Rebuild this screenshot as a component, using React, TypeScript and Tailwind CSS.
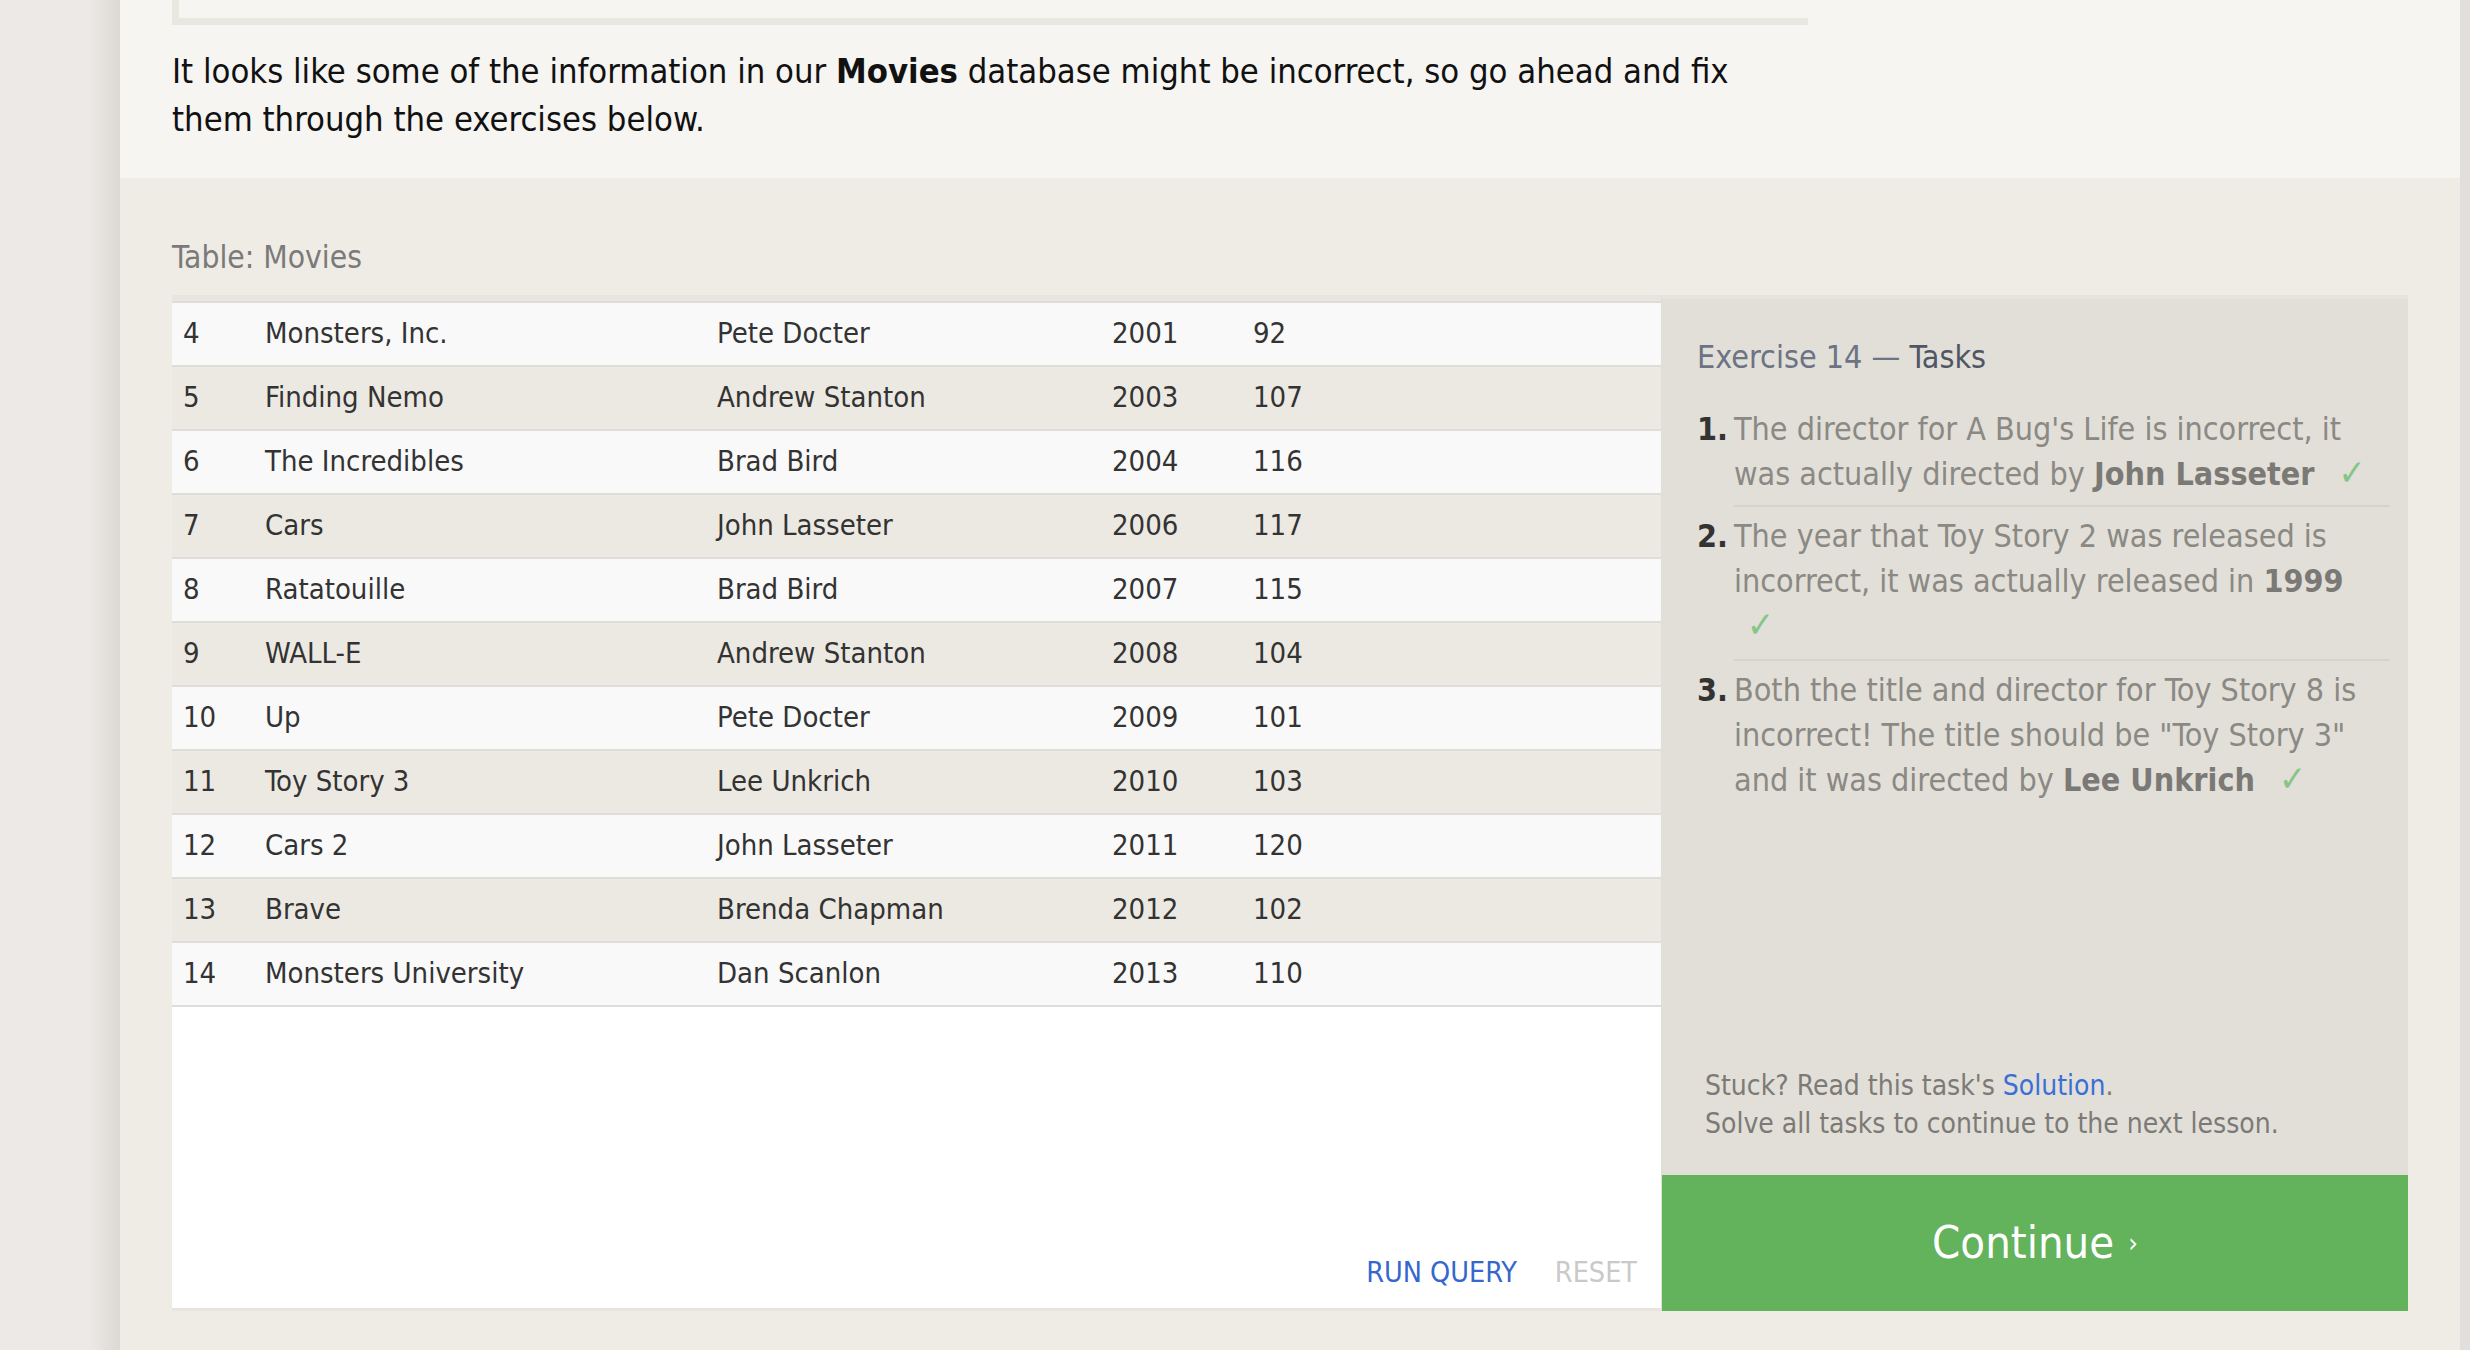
const movies = [
  { id: 4, title: "Monsters, Inc.", director: "Pete Docter", year: 2001, length: 92 },
  { id: 5, title: "Finding Nemo", director: "Andrew Stanton", year: 2003, length: 107 },
  { id: 6, title: "The Incredibles", director: "Brad Bird", year: 2004, length: 116 },
  { id: 7, title: "Cars", director: "John Lasseter", year: 2006, length: 117 },
  { id: 8, title: "Ratatouille", director: "Brad Bird", year: 2007, length: 115 },
  { id: 9, title: "WALL-E", director: "Andrew Stanton", year: 2008, length: 104 },
  { id: 10, title: "Up", director: "Pete Docter", year: 2009, length: 101 },
  { id: 11, title: "Toy Story 3", director: "Lee Unkrich", year: 2010, length: 103 },
  { id: 12, title: "Cars 2", director: "John Lasseter", year: 2011, length: 120 },
  { id: 13, title: "Brave", director: "Brenda Chapman", year: 2012, length: 102 },
  { id: 14, title: "Monsters University", director: "Dan Scanlon", year: 2013, length: 110 },
];

function Check({ className = "" }: { className?: string }) {
  return <span className={`text-[36px] leading-[0] text-[#86c586] ${className}`}>✓</span>;
}

function TasksPanel() {
  return (
    <aside className="flex w-[746px] flex-none flex-col border-t-4 border-[#e6e4dc] bg-[#e2dfd8]">
      <div className="flex-1 pl-[35px] pr-[18px] pt-[38px]">
        <h3 className="text-[32px] leading-[40px] text-[#6c7384]">
          Exercise 14 — <span className="text-[#4f5664]">Tasks</span>
        </h3>
        <ol className="mt-[30px] whitespace-nowrap text-[32px] leading-[45px]">
          <li className="flex">
            <span className="w-[37px] flex-none font-bold text-[#333333]">1.</span>
            <div className="flex-1 border-b-2 border-[#d6d3cb] pb-[8px] text-[#8a8984]">
              The director for A Bug's Life is incorrect, it
              <br />
              was actually directed by{" "}
              <b className="text-[#7a7975]">John Lasseter</b>
              <Check className="ml-[24px]" />
            </div>
          </li>
          <li className="flex pt-[7px]">
            <span className="w-[37px] flex-none font-bold text-[#333333]">2.</span>
            <div className="flex-1 border-b-2 border-[#d6d3cb] pb-[10px] text-[#8a8984]">
              The year that Toy Story 2 was released is
              <br />
              incorrect, it was actually released in{" "}
              <b className="text-[#7a7975]">1999</b>
              <br />
              <Check className="ml-[13px]" />
            </div>
          </li>
          <li className="flex pt-[7px]">
            <span className="w-[37px] flex-none font-bold text-[#333333]">3.</span>
            <div className="flex-1 text-[#8a8984]">
              Both the title and director for Toy Story 8 is
              <br />
              incorrect! The title should be "Toy Story 3"
              <br />
              and it was directed by <b className="text-[#7a7975]">Lee Unkrich</b>
              <Check className="ml-[24px]" />
            </div>
          </li>
        </ol>
      </div>
      <p className="pb-[32px] pl-[43px] text-[28px] leading-[38px] text-[#7c7a77]">
        Stuck? Read this task's <a className="text-[#3a6fd6]">Solution</a>.
        <br />
        Solve all tasks to continue to the next lesson.
      </p>
      <button className="flex h-[136px] items-center justify-center bg-[#62b35b] text-[45px] text-white">
        Continue <span className="ml-[14px] text-[27px]">›</span>
      </button>
    </aside>
  );
}

function MoviesTable() {
  return (
    <div className="flex flex-1 flex-col border-t-[6px] border-b-[3px] border-[#e7e5de] bg-white">
      <div className="border-t-2 border-[#dddcd7]">
        {movies.map((m, i) => (
          <div
            key={m.id}
            className={`grid h-[64px] grid-cols-[82px_452px_395px_141px_1fr] items-center border-b-2 border-[#dfddd8] pl-[11px] text-[29px] text-[#333333] ${
              i % 2 === 0 ? "bg-[#f9f9f9]" : "bg-[#ebe9e2]"
            }`}
          >
            <span>{m.id}</span>
            <span>{m.title}</span>
            <span>{m.director}</span>
            <span>{m.year}</span>
            <span>{m.length}</span>
          </div>
        ))}
      </div>
      <div className="flex-1" />
      <div className="flex justify-end gap-[38px] pb-[17px] pr-[24px] text-[28.5px] leading-[36px]">
        <button className="text-[#3567cc]">RUN QUERY</button>
        <button className="text-[#c9c9c9]">RESET</button>
      </div>
    </div>
  );
}

export default function App() {
  return (
    <div className="flex h-[1350px] w-[2470px] overflow-hidden font-[family-name:'DejaVu_Sans_Condensed','DejaVu_Sans',sans-serif] bg-[#e1dedb]">
      <div className="w-[120px] flex-none bg-[linear-gradient(to_right,#ece9e6_75%,#dcd8d3)]" />
      <main className="flex w-[2340px] flex-none flex-col">
        <section className="h-[178px] flex-none bg-[#f6f5f1] px-[52px]">
          <div className="h-[25px] w-[1636px] border-b-[7px] border-l-[7px] border-[#e9e8e0]" />
          <p className="mt-[22px] whitespace-nowrap text-[34.3px] leading-[48px] text-[#111111]">
            It looks like some of the information in our <b>Movies</b> database might be
            incorrect, so go ahead and fix
            <br />
            them through the exercises below.
          </p>
        </section>
        <section className="flex flex-1 flex-col bg-[#efece5] px-[52px] pt-[61px] pb-[39px]">
          <h2 className="text-[31.5px] leading-[36px] text-[#7a7a7a]">Table: Movies</h2>
          <div className="mt-[20px] flex flex-1">
            <MoviesTable />
            <div className="w-px flex-none bg-[#e0ded8]" />
            <TasksPanel />
          </div>
        </section>
      </main>
    </div>
  );
}
